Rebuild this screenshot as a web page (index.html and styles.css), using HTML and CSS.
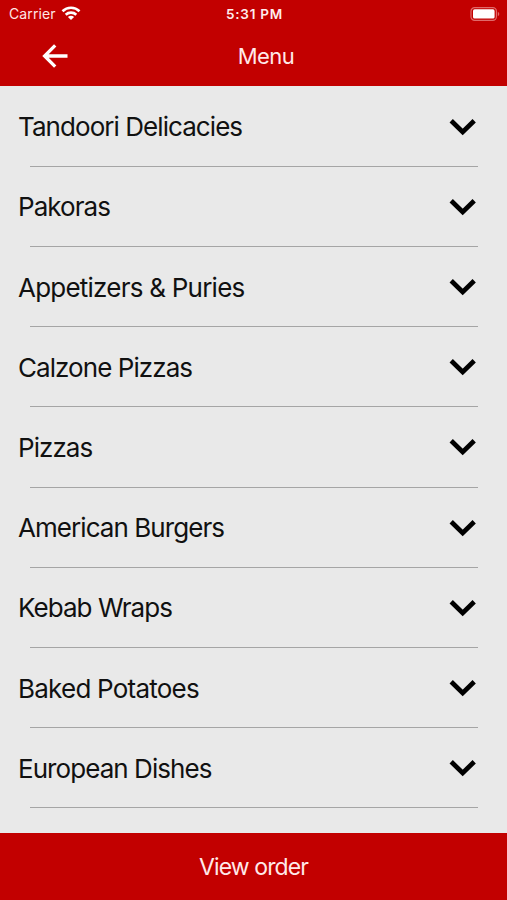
FILE: index.html
```html
<!DOCTYPE html>
<html lang="en">
<head>
<meta charset="utf-8">
<title>Menu</title>
<link rel="stylesheet" href="styles.css">
</head>
<body>
<svg class="defs" width="0" height="0"><symbol id="chevron" viewBox="0 0 28 18"><path d="M2.2 2.7 13.7 14 25.2 2.7" fill="none" stroke="#000" stroke-width="4.7"/></symbol></svg>
<header class="header">
  <div class="status">
    <div class="carrier"><span>Carrier</span>
      <svg class="wifi" width="20" height="15" viewBox="0 0 20 15" fill="none" stroke="#fff" stroke-width="2.6"><path d="M1.5 5.2C6.2.6 13.8.6 18.5 5.2M4.7 8.7c3-2.8 7.6-2.8 10.6 0"/><path d="M10 14 6.9 10.9c1.8-1.6 4.4-1.6 6.2 0Z" fill="#fff" stroke="none"/></svg>
    </div>
    <div class="time">5:31 PM</div>
    <svg class="battery" width="31" height="14" viewBox="0 0 31 14"><rect x="2" y=".7" width="25.4" height="12.6" rx="3.6" fill="none" stroke="#e06a6a" stroke-width="1.2"/><rect x="4" y="2.3" width="21.6" height="9.2" rx="1.6" fill="#fff"/><path d="M28.8 4.8c2 .8 2 3.6 0 4.4Z" fill="#e06a6a"/></svg>
  </div>
  <div class="nav">
    <svg class="back" width="28" height="26" viewBox="0 0 28 26" fill="none" stroke="#fff" stroke-width="3.3"><path d="M26.5 13H4M14.2 2.4 3.6 13l10.6 10.6"/></svg>
    <h1 class="title">Menu</h1>
  </div>
</header>
<main class="list">
  <div class="row"><span class="name">Tandoori Delicacies</span><svg class="chev"><use href="#chevron"/></svg></div>
  <div class="row"><span class="name">Pakoras</span><svg class="chev"><use href="#chevron"/></svg></div>
  <div class="row"><span class="name wide">Appetizers &amp; Puries</span><svg class="chev"><use href="#chevron"/></svg></div>
  <div class="row"><span class="name">Calzone Pizzas</span><svg class="chev"><use href="#chevron"/></svg></div>
  <div class="row"><span class="name">Pizzas</span><svg class="chev"><use href="#chevron"/></svg></div>
  <div class="row"><span class="name">American Burgers</span><svg class="chev"><use href="#chevron"/></svg></div>
  <div class="row"><span class="name">Kebab Wraps</span><svg class="chev"><use href="#chevron"/></svg></div>
  <div class="row"><span class="name wide">Baked Potatoes</span><svg class="chev"><use href="#chevron"/></svg></div>
  <div class="row"><span class="name">European Dishes</span><svg class="chev"><use href="#chevron"/></svg></div>
</main>
<footer class="order">View order</footer>
</body>
</html>
```
FILE: styles.css
```css
* { box-sizing: border-box; }
body {
  margin: 0;
  height: 900px;
  display: flex;
  flex-direction: column;
  overflow: hidden;
  background: #e9e9e9;
  color: #111;
  font-family: Inter, "Liberation Sans", sans-serif;
}
.defs { position: absolute; }
.header { height: 86px; flex: none; background: #c20000; color: #fff; }
.status {
  height: 27px;
  padding: 0 7px 0 9px;
  display: grid;
  grid-template-columns: 1fr auto 1fr;
  align-items: center;
  font-size: 14px;
}
.carrier { display: flex; align-items: center; gap: 5px; color: #ffe6e6; letter-spacing: 0.1px; }
.time { font-size: 13.5px; font-weight: 600; letter-spacing: 0.75px; color: #ffeded; }
.battery { justify-self: end; }
.nav {
  height: 57px;
  padding: 0 16px 0 41px;
  display: grid;
  grid-template-columns: 1fr auto 1fr;
  align-items: center;
}
.title { margin: 0; font-size: 22px; font-weight: 400; letter-spacing: -0.5px; color: #ffe9e9; }
.list { flex: 1; min-height: 0; overflow: hidden; padding-top: 0.6px; }
.row {
  height: 80.2px;
  padding: 0 30px 0 18px;
  display: flex;
  align-items: center;
  justify-content: space-between;
  background: linear-gradient(#a5a5a5, #a5a5a5) 30px 100% / 448px 1px no-repeat;
}
.name { font-size: 26px; letter-spacing: -0.94px; white-space: nowrap; }
.wide { letter-spacing: -0.77px; }
.chev { width: 28px; height: 18px; }
.order {
  height: 67px;
  flex: none;
  display: flex;
  align-items: center;
  justify-content: center;
  background: #c20000;
  color: #ffe9e9;
  font-size: 23px;
  letter-spacing: -0.9px;
}
```
